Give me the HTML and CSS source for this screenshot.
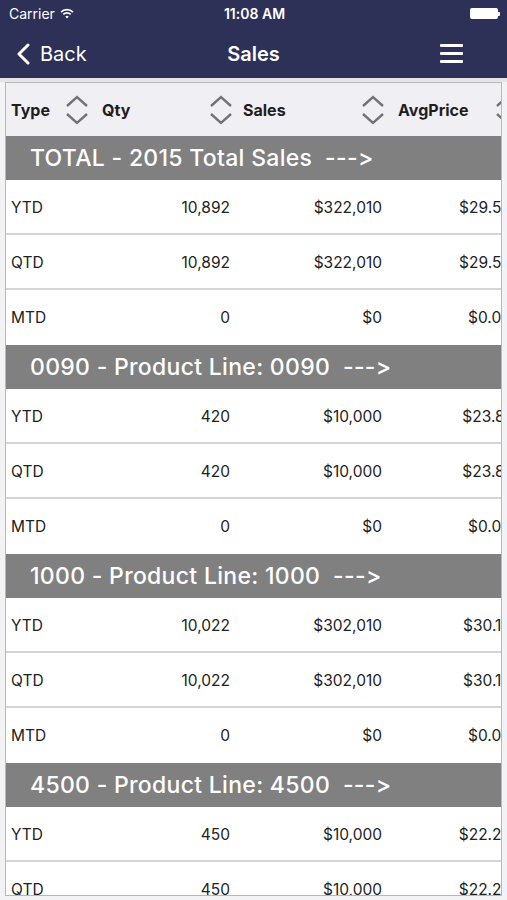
FILE: index.html
```html
<!DOCTYPE html>
<html lang="en">
<head>
  <meta charset="UTF-8" />
  <meta name="viewport" content="width=device-width, initial-scale=1.0"/>
  <title>Sales</title>
  <link rel="stylesheet" href="styles.css">
</head>
<body>

  <header class="topbar">
    <div class="status">
      <div class="carrier">Carrier
        <svg class="wifi" width="14" height="11" viewBox="0 0 14 11">
          <path d="M1 4.2 A8.5 8.5 0 0 1 13 4.2" fill="none" stroke="#fff" stroke-width="1.7"/>
          <path d="M3.3 6.4 A5.3 5.3 0 0 1 10.7 6.4" fill="none" stroke="#fff" stroke-width="1.7"/>
          <path d="M7 10.5 L5.3 8.6 A2.4 2.4 0 0 1 8.7 8.6 Z" fill="#fff"/>
        </svg>
      </div>
      <div class="clock">11:08 AM</div>
      <div class="battery"><span class="cell"></span><span class="tip"></span></div>
    </div>
    <nav class="navbar">
      <a class="back" href="#">
        <svg width="14" height="22" viewBox="0 0 14 22"><path d="M12 2 L3 11 L12 20" fill="none" stroke="#fff" stroke-width="3" stroke-linecap="round" stroke-linejoin="round"/></svg>
        Back
      </a>
      <div class="title">Sales</div>
      <button class="menu" aria-label="menu"><span></span><span></span><span></span></button>
    </nav>
  </header>

  <main class="page">
    <div class="grid-wrap">
      <div class="grid-head">
        <div class="hcell">Type <svg class="sort" width="24" height="30" viewBox="0 0 24 30"><path d="M2 11 L12 2 L22 11 M2 19 L12 28 L22 19" fill="none" stroke="#737373" stroke-width="2.4"/></svg></div>
        <div class="hcell">Qty <svg class="sort" width="24" height="30" viewBox="0 0 24 30"><path d="M2 11 L12 2 L22 11 M2 19 L12 28 L22 19" fill="none" stroke="#737373" stroke-width="2.4"/></svg></div>
        <div class="hcell">Sales <svg class="sort" width="24" height="30" viewBox="0 0 24 30"><path d="M2 11 L12 2 L22 11 M2 19 L12 28 L22 19" fill="none" stroke="#737373" stroke-width="2.4"/></svg></div>
        <div class="hcell">AvgPrice <svg class="sort" width="24" height="30" viewBox="0 0 24 30"><path d="M2 11 L12 2 L22 11 M2 19 L12 28 L22 19" fill="none" stroke="#737373" stroke-width="2.4"/></svg></div>
      </div>

      <section class="group">
        <div class="group-title">TOTAL - 2015 Total Sales  ---&gt;</div>
        <div class="row"><div>YTD</div><div class="num">10,892</div><div class="num">$322,010</div><div class="num">$29.56</div></div>
        <div class="row"><div>QTD</div><div class="num">10,892</div><div class="num">$322,010</div><div class="num">$29.56</div></div>
        <div class="row"><div>MTD</div><div class="num">0</div><div class="num">$0</div><div class="num">$0.00</div></div>
      </section>

      <section class="group">
        <div class="group-title">0090 - Product Line: 0090  ---&gt;</div>
        <div class="row"><div>YTD</div><div class="num">420</div><div class="num">$10,000</div><div class="num">$23.81</div></div>
        <div class="row"><div>QTD</div><div class="num">420</div><div class="num">$10,000</div><div class="num">$23.81</div></div>
        <div class="row"><div>MTD</div><div class="num">0</div><div class="num">$0</div><div class="num">$0.00</div></div>
      </section>

      <section class="group">
        <div class="group-title">1000 - Product Line: 1000  ---&gt;</div>
        <div class="row"><div>YTD</div><div class="num">10,022</div><div class="num">$302,010</div><div class="num">$30.13</div></div>
        <div class="row"><div>QTD</div><div class="num">10,022</div><div class="num">$302,010</div><div class="num">$30.13</div></div>
        <div class="row"><div>MTD</div><div class="num">0</div><div class="num">$0</div><div class="num">$0.00</div></div>
      </section>

      <section class="group">
        <div class="group-title">4500 - Product Line: 4500  ---&gt;</div>
        <div class="row"><div>YTD</div><div class="num">450</div><div class="num">$10,000</div><div class="num">$22.22</div></div>
        <div class="row"><div>QTD</div><div class="num">450</div><div class="num">$10,000</div><div class="num">$22.22</div></div>
      </section>
    </div>
  </main>

</body>
</html>
```

FILE: styles.css
```css
* {
  box-sizing: border-box;
}

body {
  margin: 0;
  background: #f3f3f6;
  font-family: Inter, "Noto Sans", sans-serif;
  font-feature-settings: "calt" 0, "liga" 0;
  color: #222;
  height: 900px;
  overflow: hidden;
}

.topbar {
  background: #2d3157;
  color: #fff;
}

.status {
  height: 27px;
  display: grid;
  grid-template-columns: 1fr auto 1fr;
  align-items: center;
  padding: 0 7px 0 9px;
  font-size: 14px;
}

.carrier {
  display: flex;
  align-items: center;
  gap: 5px;
}

.clock {
  font-weight: 600;
}

.battery {
  justify-self: end;
  display: flex;
  align-items: center;
}

.battery .cell {
  width: 28px;
  height: 11px;
  background: #fff;
  border-radius: 2px;
}

.battery .tip {
  width: 2px;
  height: 4px;
  background: #fff;
  border-radius: 0 1px 1px 0;
}

.navbar {
  height: 51px;
  display: grid;
  grid-template-columns: 1fr auto 1fr;
  align-items: center;
  padding: 2px 16px 0 16px;
}

.back {
  display: flex;
  align-items: center;
  gap: 10px;
  color: #fff;
  text-decoration: none;
  font-size: 20px;
}

.title {
  font-size: 20px;
  font-weight: 600;
}

.menu {
  justify-self: end;
  margin-right: 28px;
  width: 23px;
  padding: 0;
  border: none;
  background: none;
  display: flex;
  flex-direction: column;
  gap: 5px;
}

.menu span {
  display: block;
  height: 3px;
  background: #fff;
  border-radius: 1px;
}

.page {
  padding: 4px 5px 0 5px;
  background: linear-gradient(#e4e4e9 0, #e4e4e9 4px, transparent 4px);
}

.grid-wrap {
  border: 1px solid #b8b8b8;
  overflow: hidden;
  height: 814px;
  background: #fff;
}

.grid-head,
.row {
  display: grid;
  grid-template-columns: 88px 144px 152px 129px;
  width: 513px;
}

.grid-head {
  height: 53px;
  background: #efeff4;
  align-items: center;
}

.hcell {
  display: flex;
  align-items: center;
  justify-content: space-between;
  padding: 0 5px 0 5px;
  font-size: 16px;
  font-weight: 700;
  color: #1e1e1e;
}

.hcell + .hcell {
  padding-left: 8px;
}

.hcell:nth-child(3) {
  padding-left: 5px;
}

.hcell:last-child {
  padding-right: 0;
}

.group-title {
  height: 44px;
  background: #808080;
  color: #fff;
  font-size: 23px;
  font-weight: 500;
  letter-spacing: 0.3px;
  padding-left: 24px;
  display: flex;
  align-items: center;
  white-space: pre;
}

.row {
  height: 55px;
  align-items: center;
  font-size: 15.5px;
  border-bottom: 2px solid #d5d5d5;
  padding-top: 2px;
}

.row:last-child {
  border-bottom: none;
  padding-top: 0;
}

.row > div {
  padding: 0 8px 0 5px;
  white-space: nowrap;
}

.row .num {
  text-align: right;
}
```
